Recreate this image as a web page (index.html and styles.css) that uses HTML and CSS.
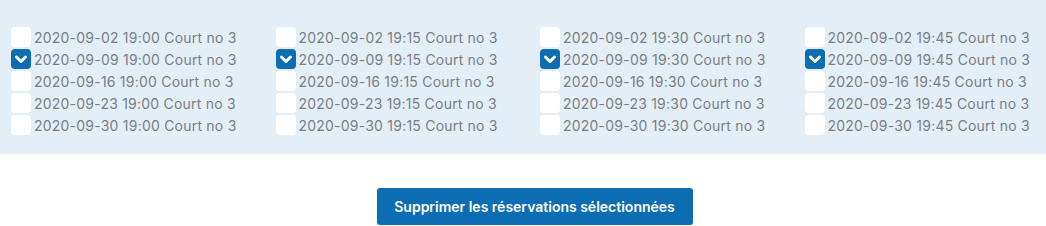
FILE: index.html
```html
<!DOCTYPE html>
<html lang="fr">
<head>
    <meta charset="UTF-8">
    <title>Mes réservations</title>
    <link rel="stylesheet" href="styles.css">
</head>
<body>
<div class="page">
    <!-- liste des créneaux réservés -->
    <form class="slots">
        <div class="slot-col">
            <label class="slot"><input type="checkbox"><span class="box"></span>2020-09-02 19:00 Court no 3</label>
            <label class="slot"><input type="checkbox" checked><span class="box"></span>2020-09-09 19:00 Court no 3</label>
            <label class="slot"><input type="checkbox"><span class="box"></span>2020-09-16 19:00 Court no 3</label>
            <label class="slot"><input type="checkbox"><span class="box"></span>2020-09-23 19:00 Court no 3</label>
            <label class="slot"><input type="checkbox"><span class="box"></span>2020-09-30 19:00 Court no 3</label>
        </div>
        <div class="slot-col">
            <label class="slot"><input type="checkbox"><span class="box"></span>2020-09-02 19:15 Court no 3</label>
            <label class="slot"><input type="checkbox" checked><span class="box"></span>2020-09-09 19:15 Court no 3</label>
            <label class="slot"><input type="checkbox"><span class="box"></span>2020-09-16 19:15 Court no 3</label>
            <label class="slot"><input type="checkbox"><span class="box"></span>2020-09-23 19:15 Court no 3</label>
            <label class="slot"><input type="checkbox"><span class="box"></span>2020-09-30 19:15 Court no 3</label>
        </div>
        <div class="slot-col">
            <label class="slot"><input type="checkbox"><span class="box"></span>2020-09-02 19:30 Court no 3</label>
            <label class="slot"><input type="checkbox" checked><span class="box"></span>2020-09-09 19:30 Court no 3</label>
            <label class="slot"><input type="checkbox"><span class="box"></span>2020-09-16 19:30 Court no 3</label>
            <label class="slot"><input type="checkbox"><span class="box"></span>2020-09-23 19:30 Court no 3</label>
            <label class="slot"><input type="checkbox"><span class="box"></span>2020-09-30 19:30 Court no 3</label>
        </div>
        <div class="slot-col">
            <label class="slot"><input type="checkbox"><span class="box"></span>2020-09-02 19:45 Court no 3</label>
            <label class="slot"><input type="checkbox" checked><span class="box"></span>2020-09-09 19:45 Court no 3</label>
            <label class="slot"><input type="checkbox"><span class="box"></span>2020-09-16 19:45 Court no 3</label>
            <label class="slot"><input type="checkbox"><span class="box"></span>2020-09-23 19:45 Court no 3</label>
            <label class="slot"><input type="checkbox"><span class="box"></span>2020-09-30 19:45 Court no 3</label>
        </div>
    </form>

    <div class="actions">
        <button type="button" class="delete-button">Supprimer les réservations sélectionnées</button>
    </div>
</div>
</body>
</html>
```

FILE: styles.css
```css
body {
    margin: 0;
    overflow: hidden;
    font-family: Inter, "Noto Sans", sans-serif;
    background-color: white;
}

.page {
    width: 1069px;
}

/* Bloc bleu clair avec les créneaux */
.slots {
    background-color: #e4eef7;
    padding: 26px 0 18px 11px;
    display: grid;
    grid-template-columns: repeat(4, 264.5px);
}

.slot {
    display: flex;
    align-items: center;
    height: 22px;
    font-size: 14px;
    letter-spacing: 0.22px;
    color: #7b7e83;
    cursor: pointer;
    white-space: nowrap;
}

.slot input {
    display: none;
}

.box {
    width: 20px;
    height: 20px;
    margin-right: 3px;
    background-color: white;
    border-radius: 4px;
    flex-shrink: 0;
}

/* case cochée : fond bleu + chevron blanc */
.slot input:checked + .box {
    background-color: #0d6db2;
    background-image: url("data:image/svg+xml,%3Csvg xmlns='http://www.w3.org/2000/svg' viewBox='0 0 20 20'%3E%3Cpath d='M5.5 8 L10 12.5 L14.5 8' fill='none' stroke='white' stroke-width='3' stroke-linecap='round' stroke-linejoin='round'/%3E%3C/svg%3E");
}

.actions {
    display: flex;
    justify-content: center;
    padding-top: 34px;
}

.delete-button {
    width: 316px;
    height: 37px;
    background-color: #0d6db2;
    color: white;
    font-family: inherit;
    font-size: 14px;
    font-weight: 600;
    border: none;
    border-radius: 3px;
    cursor: pointer;
}

.delete-button:hover {
    background-color: #0a5a93;
}
```
